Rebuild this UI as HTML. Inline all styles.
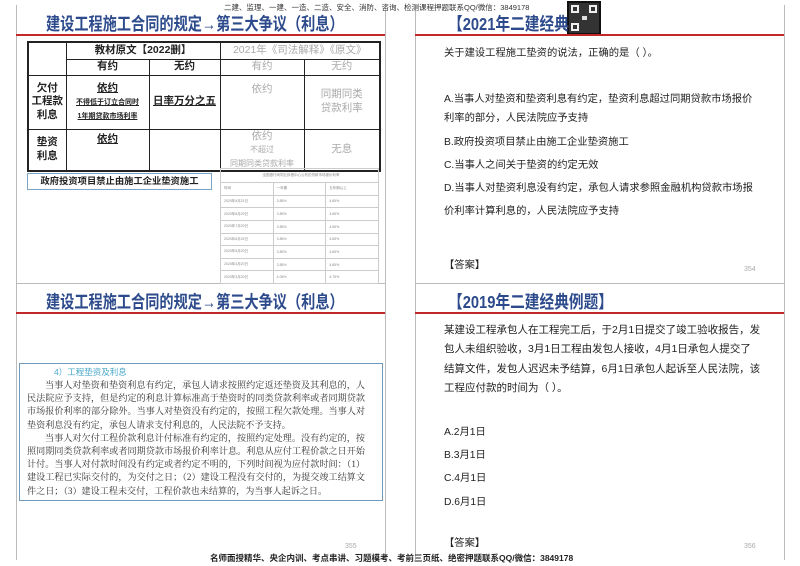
<!DOCTYPE html>
<html><head><meta charset="utf-8">
<style>
*{margin:0;padding:0;box-sizing:border-box}
body{width:800px;height:566px;background:#fff;position:relative;overflow:hidden;font-family:"Liberation Sans","Noto Sans CJK SC",sans-serif;color:#222}
.a{position:absolute;white-space:nowrap}
.vl{position:absolute;width:1px;background:#bbb}
.hl{position:absolute;height:1px;background:#bbb}
.red{position:absolute;height:2px;background:#c0282a}
.title{position:absolute;font-size:17.5px;font-weight:bold;color:#2d4b8c;white-space:nowrap;line-height:22px;transform:scaleX(0.81);transform-origin:0 0}
table{border-collapse:collapse;table-layout:fixed}
#t1{position:absolute;left:27px;top:41px;width:354px;height:127px;border:2px solid #222}
#t1 td{border:1.5px solid #222;text-align:center;font-weight:bold;font-size:10.5px;vertical-align:middle;line-height:1.3;overflow:hidden;padding:0}
#t1 .g{color:#aaa;font-weight:normal}
#t2{position:absolute;left:220px;top:168px;width:159px;height:116px;border:1px solid #ccc}
#t2 td{border:1px solid #ccc;font-size:3.5px;color:#888;padding-left:3px}
.q{position:absolute;font-size:10.3px;white-space:nowrap;color:#222;line-height:14px}
.p{position:absolute;font-size:7px;color:#aaa}
.body{position:absolute;left:27px;top:379px;width:338px;font-family:"Liberation Serif","Noto Serif CJK SC",serif;font-size:9.1px;line-height:13.2px;color:#333;text-align:justify}
</style></head><body>
<div class="vl" style="left:16px;top:5px;height:555px"></div>
<div class="vl" style="left:385px;top:5px;height:555px"></div>
<div class="vl" style="left:415px;top:5px;height:555px"></div>
<div class="vl" style="left:784px;top:5px;height:555px"></div>
<div class="hl" style="left:16px;top:283px;width:369px"></div>
<div class="hl" style="left:415px;top:283px;width:369px"></div>

<div class="a" style="left:224px;top:2px;font-size:7.5px;color:#333">二建、监理、一建、一造、二造、安全、消防、咨询、检测课程押题联系QQ/微信：3849178</div>
<div class="a" style="left:567px;top:1px;width:34px;height:34px;background:#333;border:2px solid #111">
<div style="position:absolute;left:2px;top:2px;width:8px;height:8px;border:2px solid #eee"></div>
<div style="position:absolute;right:2px;top:2px;width:8px;height:8px;border:2px solid #eee"></div>
<div style="position:absolute;left:2px;bottom:2px;width:8px;height:8px;border:2px solid #eee"></div>
<div style="position:absolute;left:13px;top:13px;width:5px;height:4px;background:#ddd"></div>
</div>

<div class="title" style="left:46px;top:13px">建设工程施工合同的规定→第三大争议（利息）</div>
<div class="red" style="left:16px;top:34px;width:369px"></div>
<table id="t1">
<colgroup><col style="width:38px"><col style="width:83px"><col style="width:71px"><col style="width:84px"><col></colgroup>
<tr style="height:17px"><td rowspan="2"></td><td colspan="2">教材原文【2022删】</td><td colspan="2" class="g" style="font-size:10.5px">2021年《司法解释》《原文》</td></tr>
<tr style="height:16px"><td>有约</td><td>无约</td><td class="g">有约</td><td class="g">无约</td></tr>
<tr style="height:54px"><td>欠付<br>工程款<br>利息</td><td><u>依约</u><br><span style="font-size:7px"><u>不得低于订立合同时</u><br><u>1年期贷款市场利率</u></span></td><td><u style="font-size:10.5px">日率万分之五</u></td><td class="g" style="vertical-align:top;padding-top:7px">依约</td><td class="g">同期同类<br>贷款利率</td></tr>
<tr style="height:38px"><td>垫资<br>利息</td><td style="vertical-align:top;padding-top:3px"><u>依约</u></td><td></td><td class="g">依约<br><span style="font-size:8px">不超过<br>同期同类贷款利率</span></td><td class="g">无息</td></tr>
</table>
<div class="a" style="left:27px;top:173px;width:185px;height:17px;border:1.5px solid #7aa3c8;font-size:9.3px;font-weight:bold;text-align:center;line-height:14px">政府投资项目禁止由施工企业垫资施工</div>
<table id="t2">
<tr style="height:14px"><td colspan="3" style="text-align:center">全国银行间同业拆借中心公布的贷款市场报价利率</td></tr>
<tr><td style="width:57px">时间</td><td style="width:50px">一年期</td><td>五年期以上</td></tr>
<tr><td>2020年9月21日</td><td>3.85%</td><td>4.65%</td></tr>
<tr><td>2020年8月20日</td><td>3.85%</td><td>4.65%</td></tr>
<tr><td>2020年7月20日</td><td>3.85%</td><td>4.65%</td></tr>
<tr><td>2020年6月22日</td><td>3.85%</td><td>4.65%</td></tr>
<tr><td>2020年5月20日</td><td>3.85%</td><td>4.65%</td></tr>
<tr><td>2020年4月20日</td><td>3.85%</td><td>4.65%</td></tr>
<tr><td>2020年3月20日</td><td>4.05%</td><td>4.75%</td></tr>
</table>

<div class="title" style="left:448px;top:13px;transform:scaleX(0.84)">【2021年二建经典</div>
<div class="red" style="left:415px;top:34px;width:369px"></div>
<div class="q" style="left:444px;top:47px">关于建设工程施工垫资的说法，正确的是（ ）。</div>
<div class="q" style="left:444px;top:93px">A.当事人对垫资和垫资利息有约定，垫资利息超过同期贷款市场报价</div>
<div class="q" style="left:444px;top:112px">利率的部分，人民法院应予支持</div>
<div class="q" style="left:444px;top:136px">B.政府投资项目禁止由施工企业垫资施工</div>
<div class="q" style="left:444px;top:159px">C.当事人之间关于垫资的约定无效</div>
<div class="q" style="left:444px;top:182px">D.当事人对垫资利息没有约定，承包人请求参照金融机构贷款市场报</div>
<div class="q" style="left:444px;top:205px">价利率计算利息的，人民法院应予支持</div>
<div class="q" style="left:444px;top:259px">【答案】</div>
<div class="p" style="left:744px;top:266px">354</div>

<div class="title" style="left:46px;top:291px">建设工程施工合同的规定→第三大争议（利息）</div>
<div class="red" style="left:16px;top:312px;width:369px"></div>
<div class="a" style="left:19px;top:363px;width:364px;height:138px;border:1.5px solid #6f9bbf"></div>
<div class="a" style="left:54px;top:366px;font-size:8.5px;color:#4aa8c8">4）工程垫资及利息</div>
<div class="body">
<div style="text-indent:18px">当事人对垫资和垫资利息有约定，承包人请求按照约定返还垫资及其利息的，人民法院应予支持，但是约定的利息计算标准高于垫资时的同类贷款利率或者同期贷款市场报价利率的部分除外。当事人对垫资没有约定的，按照工程欠款处理。当事人对垫资利息没有约定，承包人请求支付利息的，人民法院不予支持。</div>
<div style="text-indent:18px">当事人对欠付工程价款利息计付标准有约定的，按照约定处理。没有约定的，按照同期同类贷款利率或者同期贷款市场报价利率计息。利息从应付工程价款之日开始计付。当事人对付款时间没有约定或者约定不明的，下列时间视为应付款时间：（1）建设工程已实际交付的，为交付之日；（2）建设工程没有交付的，为提交竣工结算文件之日；（3）建设工程未交付，工程价款也未结算的，为当事人起诉之日。</div>
</div>
<div class="p" style="left:345px;top:543px">355</div>

<div class="title" style="left:448px;top:291px;transform:scaleX(0.84)">【2019年二建经典例题】</div>
<div class="red" style="left:415px;top:312px;width:369px"></div>
<div class="q" style="left:444px;top:323px;font-size:10.5px">某建设工程承包人在工程完工后，于2月1日提交了竣工验收报告，发</div>
<div class="q" style="left:444px;top:342px;font-size:10.5px">包人未组织验收，3月1日工程由发包人接收，4月1日承包人提交了</div>
<div class="q" style="left:444px;top:362px;font-size:10.5px">结算文件，发包人迟迟未予结算，6月1日承包人起诉至人民法院，该</div>
<div class="q" style="left:444px;top:381px;font-size:10.5px">工程应付款的时间为（ ）。</div>
<div class="q" style="left:444px;top:426px">A.2月1日</div>
<div class="q" style="left:444px;top:449px">B.3月1日</div>
<div class="q" style="left:444px;top:472px">C.4月1日</div>
<div class="q" style="left:444px;top:496px">D.6月1日</div>
<div class="q" style="left:444px;top:537px">【答案】</div>
<div class="p" style="left:744px;top:543px">356</div>

<div class="a" style="left:210px;top:552px;font-size:8.5px;font-weight:bold;color:#222">名师面授精华、央企内训、考点串讲、习题模考、考前三页纸、绝密押题联系QQ/微信：3849178</div>
</body></html>
